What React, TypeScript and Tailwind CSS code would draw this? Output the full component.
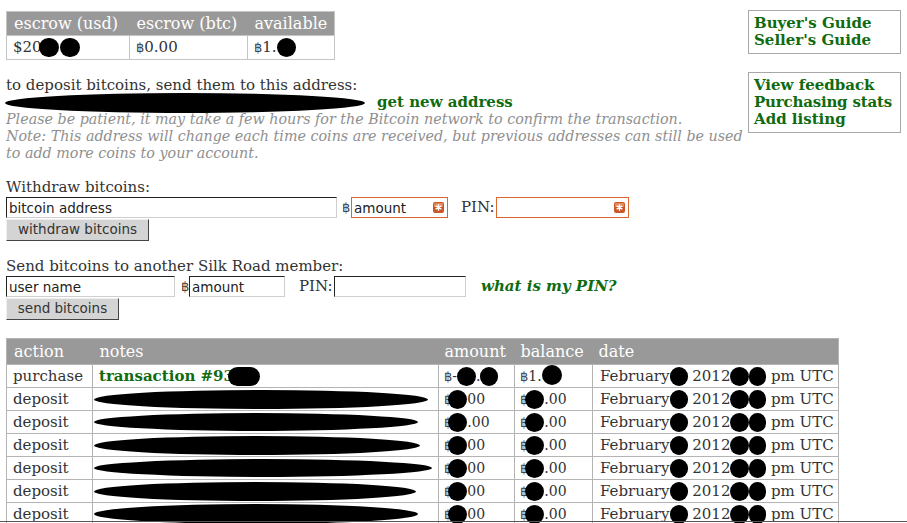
import React from "react";

const serif = "font-['DejaVu_Serif',serif]";

function Dot({ c = "w-[19px] h-[19px]" }: { c?: string }) {
  return <span className={`inline-block ${c} rounded-full bg-black align-middle`} />;
}

function Bt() {
  return <span className="font-['DejaVu_Sans',sans-serif] text-[13px] text-[#444]">฿</span>;
}

function PwIcon() {
  return (
    <svg
      width="11"
      height="11"
      viewBox="0 0 11 11"
      className="absolute right-[4px] top-[5px]"
    >
      <rect x="0" y="0" width="11" height="11" rx="2" fill="#c9572a" />
      <rect x="1" y="1" width="9" height="4" rx="1" fill="#e08a5a" />
      <path d="M5.5 2.2v6.6M2.6 3.8l5.8 3.4M8.4 3.8L2.6 7.2" stroke="#fff" strokeWidth="1.4" />
    </svg>
  );
}

const inputBase =
  "h-[21px] px-[2px] text-[13.5px] text-[#222] font-['DejaVu_Sans',sans-serif] outline-none bg-white";
const insetBorder = "border border-t-[#222] border-l-[#222] border-b-[#cfcfcf] border-r-[#cfcfcf]";
const orangeBorder = "border border-[#d8682f]";
const btn =
  "h-[22px] px-[9px] text-[13.5px] text-[#333] font-['DejaVu_Sans',sans-serif] bg-[#d4d4d4] border border-t-[#eeeeee] border-l-[#eeeeee] border-b-[#444] border-r-[#444] leading-none";

const notesBlobs = [
  "w-[334px] h-[19px]",
  "w-[324px] h-[18px]",
  "w-[326px] h-[19px]",
  "w-[338px] h-[18px]",
  "w-[322px] h-[19px]",
  "w-[324px] h-[20px]",
];

function DateCell() {
  return (
    <td className="overflow-hidden border border-[#b4b4b4] pl-[7px] pr-0 whitespace-nowrap">
      February<Dot c="w-[18px] h-[19px]" /> 2012,<Dot c="w-[19px] h-[19px] -ml-[5px]" />
      <Dot c="w-[17px] h-[19px]" /> pm UTC
    </td>
  );
}

export default function App() {
  return (
    <div className={`relative h-[523px] w-[907px] overflow-hidden bg-white text-[15px] leading-[17px] text-[#333] ${serif}`}>
      <div className="flex pl-[6px] pt-[10px]">
        <div className="flex-1">
          <table className="mt-[1px] border-collapse border border-[#c4c4c4]">
            <thead>
              <tr className="h-[24px] bg-[#999999] text-left text-[16px] font-normal text-white">
                <th className="w-[123px] px-[7px] font-normal">escrow (usd)</th>
                <th className="w-[118px] px-[7px] font-normal">escrow (btc)</th>
                <th className="w-[87px] px-[7px] font-normal">available</th>
              </tr>
            </thead>
            <tbody>
              <tr className="h-[24px]">
                <td className="border border-[#c4c4c4] px-[6px] whitespace-nowrap">
                  $20<Dot c="w-[20px] h-[19px] -ml-[3px]" />
                  <Dot c="w-[20px] h-[19px] ml-[1px]" />
                </td>
                <td className="border border-[#c4c4c4] px-[6px]">
                  <Bt />0.00
                </td>
                <td className="border border-[#c4c4c4] px-[6px] whitespace-nowrap">
                  <Bt />1.<Dot c="w-[19px] h-[19px]" />
                </td>
              </tr>
            </tbody>
          </table>

          <div className="mt-[17px]">
            <div>to deposit bitcoins, send them to this address:</div>
            <div className="flex h-[17px] items-center">
              <span className="inline-block h-[20px] w-[360px] -ml-[1px] rounded-[50%] bg-black" />
              <a className="ml-[12px] font-bold text-[#106b10]">get new address</a>
            </div>
            <div className="whitespace-nowrap text-[14.3px] italic text-[#8f8f8f]">
              Please be patient, it may take a few hours for the Bitcoin network to confirm the transaction.
              <br />
              Note: This address will change each time coins are received, but previous addresses can still be used
              <br />
              to add more coins to your account.
            </div>
          </div>
        </div>

        <div className="mr-[6px] flex w-[153px] flex-col gap-[18px] whitespace-nowrap font-bold text-[#106b10]">
          <div className="flex flex-col border border-[#a8a8a8] px-[5px] py-[4px]">
            <a>Buyer's Guide</a>
            <a>Seller's Guide</a>
          </div>
          <div className="flex flex-col border border-[#a8a8a8] px-[5px] py-[4px]">
            <a>View feedback</a>
            <a className="tracking-[-0.2px]">Purchasing stats</a>
            <a>Add listing</a>
          </div>
        </div>
      </div>

      <div className="pl-[6px] pt-[17px]">
        <div>Withdraw bitcoins:</div>
        <div className="mt-[1px] flex items-center">
          <input readOnly value="bitcoin address" className={`${inputBase} ${insetBorder} w-[331px]`} />
          <span className="ml-[5px] w-[9px]">
            <Bt />
          </span>
          <div className="relative">
            <input readOnly value="amount" className={`${inputBase} ${orangeBorder} w-[97px]`} />
            <PwIcon />
          </div>
          <span className="ml-[13px] w-[35px]">PIN:</span>
          <div className="relative">
            <input readOnly value="" className={`${inputBase} ${orangeBorder} w-[133px]`} />
            <PwIcon />
          </div>
        </div>
        <button className={`${btn} mt-[1px] w-[143px]`}>withdraw bitcoins</button>

        <div className="mt-[17px]">Send bitcoins to another Silk Road member:</div>
        <div className="mt-[1px] flex items-center">
          <input readOnly value="user name" className={`${inputBase} ${insetBorder} w-[169px]`} />
          <span className="ml-[6px] w-[8px]">
            <Bt />
          </span>
          <input readOnly value="amount" className={`${inputBase} ${insetBorder} w-[96px]`} />
          <span className="ml-[14px] w-[35px]">PIN:</span>
          <input readOnly value="" className={`${inputBase} ${insetBorder} w-[132px]`} />
          <a className="ml-[15px] font-bold italic text-[#106b10]">what is my PIN?</a>
        </div>
        <button className={`${btn} mt-[1px] w-[113px]`}>send bitcoins</button>

        <table className="mt-[18px] w-[832px] table-fixed border-collapse border border-[#b4b4b4]">
          <thead>
            <tr className="h-[26px] bg-[#999999] text-left text-[16px] text-white">
              <th className="w-[86px] px-[7px] font-normal">action</th>
              <th className="w-[346px] px-[7px] font-normal">notes</th>
              <th className="w-[76px] px-[6px] font-normal">amount</th>
              <th className="w-[78px] px-[6px] font-normal">balance</th>
              <th className="w-[246px] px-[6px] font-normal">date</th>
            </tr>
          </thead>
          <tbody>
            <tr className="h-[23px]">
              <td className="border border-[#b4b4b4] px-[6px]">purchase</td>
              <td className="border border-[#b4b4b4] px-[6px] whitespace-nowrap font-bold text-[#106b10]">
                transaction #93<Dot c="w-[32px] h-[19px] -ml-[6px]" />
              </td>
              <td className="border border-[#b4b4b4] px-[5px] whitespace-nowrap text-[14px]">
                <Bt />-<Dot c="w-[19px] h-[19px]" />.<Dot c="w-[18px] h-[19px]" />
              </td>
              <td className="border border-[#b4b4b4] px-[5px] whitespace-nowrap text-[14px]">
                <Bt />1.<Dot c="w-[20px] h-[20px] -mt-[4px]" />
              </td>
              <DateCell />
            </tr>
            {notesBlobs.map((b, i) => (
              <tr key={i} className="h-[23px]">
                <td className="border border-[#b4b4b4] px-[6px]">deposit</td>
                <td className="border border-[#b4b4b4] px-[1px] whitespace-nowrap">
                  <span className={`inline-block ${b} rounded-[50%] bg-black align-middle`} />
                </td>
                <td className="border border-[#b4b4b4] px-[5px] whitespace-nowrap text-[14px]">
                  <Bt />
                  <Dot c="w-[19px] h-[19px] -ml-[4px]" />
                  {i === 1 ? ".00" : "00"}
                </td>
                <td className="border border-[#b4b4b4] px-[5px] whitespace-nowrap text-[14px]">
                  <Bt />
                  <Dot c="w-[19px] h-[19px] -ml-[3px]" />
                  .00
                </td>
                <DateCell />
              </tr>
            ))}
          </tbody>
        </table>
      </div>

      <div className="absolute left-0 top-[521px] h-px w-full bg-[#555]" />
    </div>
  );
}
